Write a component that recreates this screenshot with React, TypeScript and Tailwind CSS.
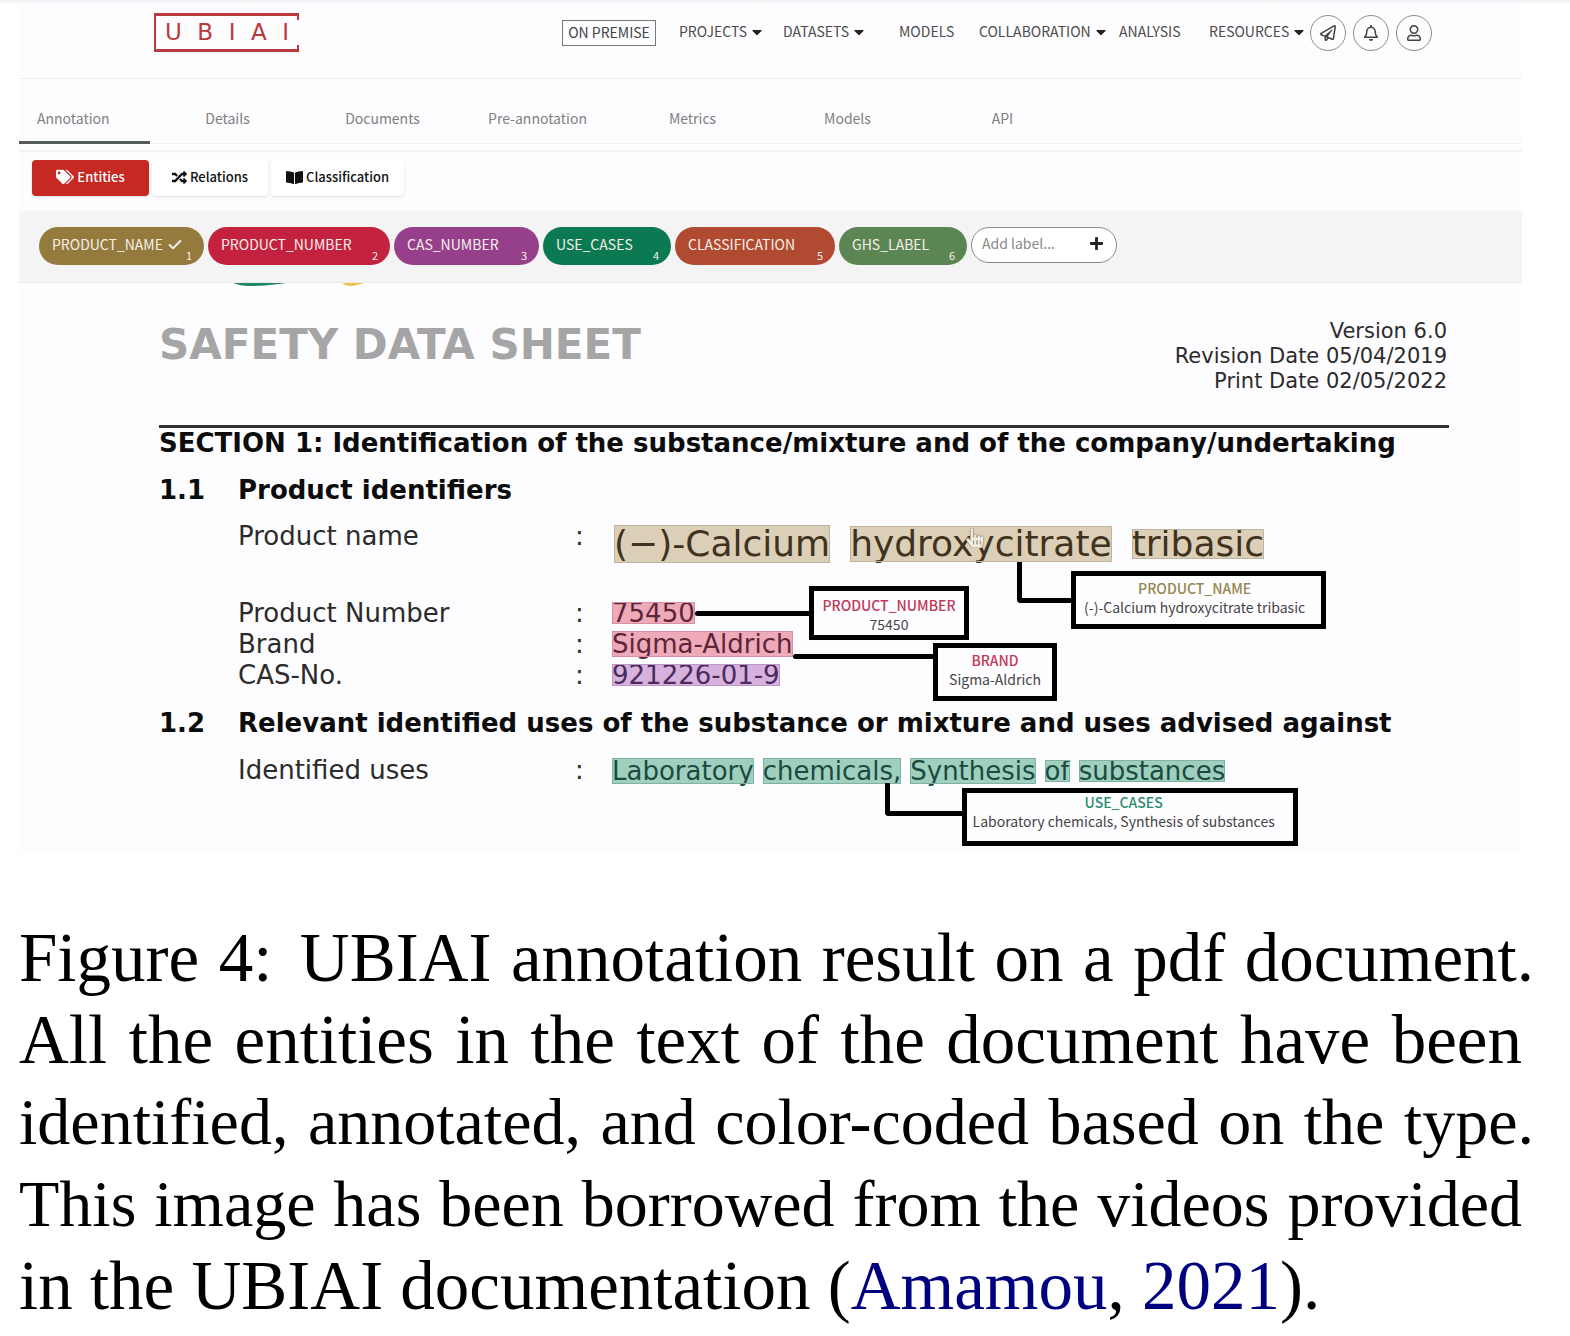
import type { ReactNode } from 'react';
import { FaTags, FaRandom, FaBookOpen, FaCaretDown, FaPlus, FaRegPaperPlane, FaRegBell, FaRegUser, FaHandPointer } from 'react-icons/fa';
import { Check } from 'lucide-react';

const UI_FONT = 'font-["Noto_Sans_CJK_SC",sans-serif]';
const DOC_FONT = 'font-["DejaVu_Sans",sans-serif]';

const tabs = ['Details', 'Documents', 'Pre-annotation', 'Metrics', 'Models', 'API'];

const labels = [
  { name: 'PRODUCT_NAME', key: 1, style: 'w-[165px] bg-[#957a3d]', active: true },
  { name: 'PRODUCT_NUMBER', key: 2, style: 'w-[182px] bg-[#c4213e]' },
  { name: 'CAS_NUMBER', key: 3, style: 'w-[145px] bg-[#96408c]' },
  { name: 'USE_CASES', key: 4, style: 'w-[128px] bg-[#0b7a52]' },
  { name: 'CLASSIFICATION', key: 5, style: 'w-[160px] bg-[#b04a30]' },
  { name: 'GHS_LABEL', key: 6, style: 'w-[128px] bg-[#5b8553]' },
];

function Logo() {
  return (
    <a href="#" aria-label="UBIAI" className="relative flex h-[39px] w-[145px] items-center justify-between border-y-[3px] border-l-2 border-[#b93a3c] pr-[10px] pl-[9px] font-['DejaVu_Sans',sans-serif] text-[23px] leading-none text-[#b93a3c]">
      <span>U</span><span>B</span><span>I</span><span>A</span><span>I</span>
      <span className="absolute top-0 right-0 h-1 w-0.5 bg-[#b93a3c]" />
      <span className="absolute right-0 bottom-0 h-1 w-0.5 bg-[#b93a3c]" />
    </a>
  );
}

function NavItem({ children, caret, width }: { children: ReactNode; caret?: boolean; width: string }) {
  return (
    <a href="#" className={`flex items-center gap-0.5 pb-0.5 whitespace-nowrap ${width}`}>
      {children}
      {caret && <FaCaretDown className="size-4 text-[#222]" />}
    </a>
  );
}

function RoundButton({ label, children }: { label: string; children: ReactNode }) {
  return (
    <button aria-label={label} className="flex size-9 items-center justify-center rounded-full border-[1.5px] border-[#8c8c8c] text-[16px] text-[#444]">
      {children}
    </button>
  );
}

function Mark({ tone, children }: { tone: string; children: ReactNode }) {
  return <mark className={`relative inline-block whitespace-nowrap outline-1 -outline-offset-1 ${tone}`}>{children}</mark>;
}

const TAN = 'bg-[#dccfb8] outline-[#bfb49d] text-[#3f3320]';
const PINK = 'bg-[#eeaab8] outline-[#d98fa0] text-[#5d2538]';
const PURPLE = 'bg-[#d6b2dd] outline-[#c093c8] text-[#4b2a5c]';
const GREEN = 'bg-[#9fd0bf] outline-[#7fb3a2] text-[#1c4a40]';

function Callout({ title, value, tone, place }: { title: string; value: string; tone: string; place: string }) {
  return (
    <span className={`absolute z-10 flex flex-col items-center border-[5px] border-black bg-[#fefdff] font-["Noto_Sans_CJK_SC",sans-serif] text-[14px] ${place}`}>
      <span className={`leading-[19px] font-medium ${tone}`}>{title}</span>
      <span className="leading-[19px] text-[#444]">{value}</span>
    </span>
  );
}

function Row({ label, children }: { label: string; children: ReactNode }) {
  return (
    <div className="flex items-start leading-[31px]">
      <dt className="flex w-[374px] shrink-0">
        <span className="w-[337px]">{label}</span>:
      </dt>
      <dd>{children}</dd>
    </div>
  );
}

function Heading({ number, children }: { number: string; children: ReactNode }) {
  return (
    <h3 className="mt-4 flex text-[26px] leading-[31px] font-bold whitespace-nowrap text-[#0c0c0c]">
      <span className="w-[79px] shrink-0">{number}</span>
      {children}
    </h3>
  );
}

export default function App() {
  return (
    <main className="bg-white">
      <div className="h-1 bg-linear-to-b from-[#f3f1f5] to-[#fbfafc]" />
      <section className={`mr-12 ml-[19px] bg-[#fdfcfe] pb-[67px] ${UI_FONT}`}>
        <header className="flex h-[75px] items-start justify-between border-b border-[#eeedef] pt-[9px] pr-[90px] pl-[135px]">
          <Logo />
          <nav className="flex h-[39px] items-center text-[14px] text-[#4c4c4c]">
            <a href="#" className="mr-[23px] flex h-[26px] w-[94px] items-center justify-center border border-[#777] pb-0.5 leading-none whitespace-nowrap text-[#444]">ON PREMISE</a>
            <NavItem caret width="w-[104px]">PROJECTS</NavItem>
            <NavItem caret width="w-[116px]">DATASETS</NavItem>
            <NavItem width="w-20">MODELS</NavItem>
            <NavItem caret width="w-[140px]">COLLABORATION</NavItem>
            <NavItem width="w-[90px]">ANALYSIS</NavItem>
            <NavItem caret width="w-[101px]">RESOURCES</NavItem>
            <div className="flex gap-[7px]">
              <RoundButton label="Messages"><FaRegPaperPlane /></RoundButton>
              <RoundButton label="Notifications"><FaRegBell /></RoundButton>
              <RoundButton label="Account"><FaRegUser /></RoundButton>
            </div>
          </nav>
        </header>

        <nav className="flex h-[65px] text-[14px] text-[#808080]">
          <a href="#" className="flex w-[131px] items-center border-b-[3px] border-[#555a5a] pt-[17px] pl-[18px]">Annotation</a>
          <div className="flex grow border-b border-[#f1f0f2]">
            {tabs.map((t) => (
              <a key={t} href="#" className="flex w-[155px] items-center justify-center pt-[15px]">{t}</a>
            ))}
          </div>
        </nav>

        <div className="mt-[6px] flex gap-[3px] border-t-2 border-[#f2f1f3] pt-2 pb-[15px] pl-[13px] text-[13px] font-medium text-[#111]">
          <button className="flex h-9 w-[117px] items-center justify-center gap-[3px] rounded bg-[#c62822] pb-0.5 text-white shadow"><FaTags className="size-[18px]" />Entities</button>
          <button className="flex h-9 w-[116px] items-center justify-center gap-[3px] rounded bg-white pb-0.5 shadow"><FaRandom className="size-[15px]" />Relations</button>
          <button className="flex h-9 w-[133px] items-center justify-center gap-[3px] rounded bg-white pb-0.5 shadow"><FaBookOpen className="size-[17px]" />Classification</button>
        </div>

        <div className="flex h-[72px] items-start gap-1 border-b border-[#e9e9ea] bg-[#f4f4f5] pt-4 pl-5 text-[14px] text-[#f6efea]">
          {labels.map((l) => (
            <button key={l.name} className={`relative flex h-[38px] items-center gap-1 rounded-full pb-[3px] pl-[13px] ${l.style}`}>
              {l.name}
              {l.active && <Check className="size-4" strokeWidth={3} />}
              <span className="absolute right-3 bottom-1 text-[11px] leading-3">{l.key}</span>
            </button>
          ))}
          <div className="flex h-9 w-[146px] items-center rounded-full border border-[#8a8a8a] bg-white pr-3 pb-[3px] pl-[10px]">
            <input aria-label="Add label" placeholder="Add label..." className="w-0 grow bg-transparent outline-none placeholder:text-[#888]" />
            <button aria-label="Add" className="text-[#222]"><FaPlus className="size-[15px]" /></button>
          </div>
        </div>

        <article className={`pr-[73px] pl-[140px] text-[26px] text-[#2b2b2b] ${DOC_FONT}`}>
          <svg className="-ml-1 block h-1 w-[300px]" viewBox="0 0 300 4">
            <path d="M79 0h52c-16 2-24 3-36 3-8 0-12-1-16-3z" fill="#1d8765" />
            <path d="M187 0h22c-7 2-10 3-13 3-4 0-6-1-9-3z" fill="#e8c44a" />
          </svg>
          <div className="flex h-[138px] items-start justify-between pt-8">
            <h1 className="text-[42px] leading-[52px] font-bold whitespace-nowrap text-[#a5a5a5]">SAFETY DATA SHEET</h1>
            <p className="pr-0.5 text-right text-[21px] leading-[25px] whitespace-nowrap">Version 6.0<br />Revision Date 05/04/2019<br />Print Date 02/05/2022</p>
          </div>
          <h2 className="border-t-[3px] border-[#333] text-[26px] leading-[31px] font-bold whitespace-nowrap text-[#0c0c0c]">
            SECTION 1: Identification of the substance/mixture and of the company/undertaking
          </h2>
          <Heading number="1.1">Product identifiers</Heading>
          <dl className="mt-[15px] pb-px pl-[79px]">
            <div className="h-[77px]">
              <Row label="Product name">
                <div className="flex items-baseline gap-5 pt-1 pl-0.5 text-[36px]">
                  <Mark tone={`leading-[38px] ${TAN}`}>(−)-Calcium</Mark>
                  <Mark tone={`leading-[36px] ${TAN}`}>
                    hydroxycitrate
                    <FaHandPointer className="absolute top-0.5 left-[115px] size-5 fill-[#f3ede2] stroke-[#a59b8a] [stroke-width:24px]" />
                    <span className="absolute top-[36px] left-[167px] h-[41px] w-[60px] rounded-bl-sm border-b-[5px] border-l-[5px] border-black" />
                    <Callout title="PRODUCT_NAME" value="(-)-Calcium hydroxycitrate tribasic" tone="text-[#95854f]" place="top-[45px] left-[221px] h-[58px] w-[255px] pt-[3px] pr-2" />
                  </Mark>
                  <Mark tone={`leading-[30px] ${TAN}`}>tribasic</Mark>
                </div>
              </Row>
            </div>
            <Row label="Product Number">
              <Mark tone={`leading-[22px] ${PINK}`}>
                75450
                <span className="absolute top-[9px] left-full h-[5px] w-[115px] rounded-l-full bg-black" />
                <Callout title="PRODUCT_NUMBER" value="75450" tone="text-[#c03a58]" place="-top-4 left-[197px] h-[54px] w-[160px] pt-[5px]" />
              </Mark>
            </Row>
            <Row label="Brand">
              <Mark tone={`leading-[26px] ${PINK}`}>
                Sigma-Aldrich
                <span className="absolute top-[23px] left-full h-[5px] w-[141px] rounded-l-full bg-black" />
                <Callout title="BRAND" value="Sigma-Aldrich" tone="text-[#c03a58]" place="top-[12px] left-[321px] h-[58px] w-[124px] pt-[3px]" />
              </Mark>
            </Row>
            <Row label="CAS-No.">
              <Mark tone={`leading-[22px] ${PURPLE}`}>921226-01-9</Mark>
            </Row>
          </dl>
          <Heading number="1.2">Relevant identified uses of the substance or mixture and uses advised against</Heading>
          <dl className="mt-4 pl-[79px]">
            <Row label="Identified uses">
              <div className="flex items-baseline gap-[9px] pt-[3px]">
                <Mark tone={`leading-[26px] ${GREEN}`}>Laboratory</Mark>
                <Mark tone={`leading-[26px] ${GREEN}`}>
                  chemicals,
                  <span className="absolute top-[25px] left-[122px] h-[33px] w-20 rounded-bl-sm border-b-[5px] border-l-[5px] border-black" />
                  <Callout title="USE_CASES" value="Laboratory chemicals, Synthesis of substances" tone="text-[#2c8c70]" place="top-[30px] left-[199px] h-[58px] w-[336px] pr-3" />
                </Mark>
                <Mark tone={`leading-[26px] ${GREEN}`}>Synthesis</Mark>
                <Mark tone={`leading-[22px] ${GREEN}`}>of</Mark>
                <Mark tone={`leading-[22px] ${GREEN}`}>substances</Mark>
              </div>
            </Row>
          </dl>
        </article>
      </section>

      <p className="mt-16 mr-12 ml-[19px] font-['Liberation_Serif',serif] text-[69px] leading-[82px] whitespace-nowrap text-black">
        <span className="-mr-3 block [text-align-last:justify]"><span className="mr-2">Figure 4:</span> UBIAI annotation result on a pdf document.</span>
        <span className="block [text-align-last:justify]">All the entities in the text of the document have been</span>
        <span className="-mr-3 block text-[66px] [text-align-last:justify]">identified, annotated, and color-coded based on the type.</span>
        <span className="block text-[66px] [text-align-last:justify]">This image has been borrowed from the videos provided</span>
        <span className="block">in the UBIAI documentation (<a href="#" className="text-[#00007f]">Amamou</a>, <a href="#" className="text-[#00007f]">2021</a>).</span>
      </p>
    </main>
  );
}
